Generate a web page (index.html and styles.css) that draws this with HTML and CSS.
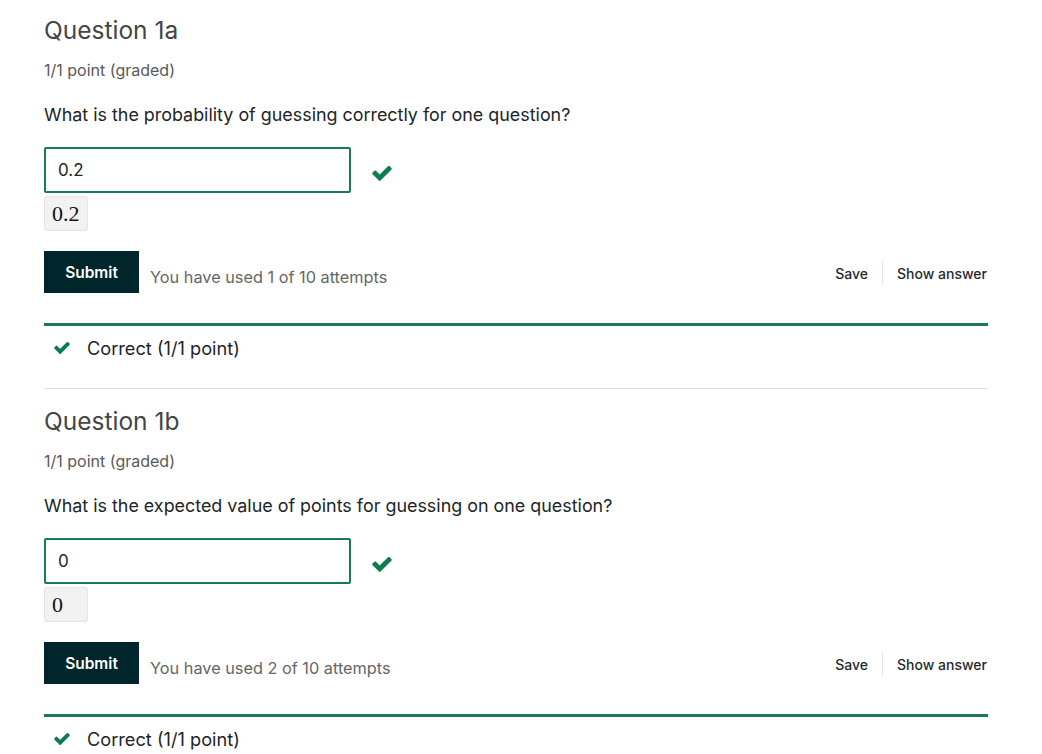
FILE: index.html
```html
<!DOCTYPE html>
<html>
<head>
<meta charset="utf-8">
<link rel="stylesheet" href="styles.css">
</head>
<body>
<div class="page">
  <section class="problem">
    <h3 class="title">Question 1a</h3>
    <div class="meta">1/1 point (graded)</div>
    <p class="prompt">What is the probability of guessing correctly for one question?</p>
    <div class="answer-row">
      <div class="input">0.2</div>
      <svg class="check big" viewBox="121 338 1550 1190"><path d="M1671 566q0 40-28 68l-724 724-136 136q-28 28-68 28t-68-28l-136-136-362-362q-28-28-28-68t28-68l136-136q28-28 68-28t68 28l294 295 656-657q28-28 68-28t68 28l136 136q28 28 28 68z"/></svg>
    </div>
    <div class="preview">0.2</div>
    <div class="actions">
      <button class="submit">Submit</button>
      <span class="attempts">You have used 1 of 10 attempts</span>
      <div class="links">
        <span class="link">Save</span>
        <span class="sep"></span>
        <span class="link">Show answer</span>
      </div>
    </div>
    <div class="feedback">
      <svg class="check small" viewBox="121 338 1550 1190"><path d="M1671 566q0 40-28 68l-724 724-136 136q-28 28-68 28t-68-28l-136-136-362-362q-28-28-28-68t28-68l136-136q28-28 68-28t68 28l294 295 656-657q28-28 68-28t68 28l136 136q28 28 28 68z"/></svg>
      <span>Correct (1/1 point)</span>
    </div>
  </section>
  <hr class="divider">
  <section class="problem">
    <h3 class="title">Question 1b</h3>
    <div class="meta">1/1 point (graded)</div>
    <p class="prompt">What is the expected value of points for guessing on one question?</p>
    <div class="answer-row">
      <div class="input">0</div>
      <svg class="check big" viewBox="121 338 1550 1190"><path d="M1671 566q0 40-28 68l-724 724-136 136q-28 28-68 28t-68-28l-136-136-362-362q-28-28-28-68t28-68l136-136q28-28 68-28t68 28l294 295 656-657q28-28 68-28t68 28l136 136q28 28 28 68z"/></svg>
    </div>
    <div class="preview">0</div>
    <div class="actions">
      <button class="submit">Submit</button>
      <span class="attempts">You have used 2 of 10 attempts</span>
      <div class="links">
        <span class="link">Save</span>
        <span class="sep"></span>
        <span class="link">Show answer</span>
      </div>
    </div>
    <div class="feedback">
      <svg class="check small" viewBox="121 338 1550 1190"><path d="M1671 566q0 40-28 68l-724 724-136 136q-28 28-68 28t-68-28l-136-136-362-362q-28-28-28-68t28-68l136-136q28-28 68-28t68 28l294 295 656-657q28-28 68-28t68 28l136 136q28 28 28 68z"/></svg>
      <span>Correct (1/1 point)</span>
    </div>
  </section>
</div>
</body>
</html>
```
FILE: styles.css
```css
html, body {
  margin: 0;
  padding: 0;
  background: #fff;
}
body {
  font-family: Inter, "Noto Sans", sans-serif;
  color: #212529;
  overflow: hidden;
}
.page {
  width: 944px;
  margin-left: 44px;
  padding-top: 15px;
}
.title {
  margin: 0;
  font-size: 24.5px;
  line-height: 30px;
  font-weight: 400;
  color: #454545;
}
.meta {
  margin-top: 15px;
  font-size: 16px;
  line-height: 20px;
  color: #5a5a5a;
}
.prompt {
  margin: 23px 0 0;
  font-size: 17.9px;
  line-height: 24px;
  color: #212529;
}
.answer-row {
  margin-top: 20px;
  display: flex;
  align-items: center;
}
.input {
  box-sizing: border-box;
  width: 307px;
  height: 46px;
  border: 2px solid #1a7a52;
  border-radius: 2px;
  padding: 0 12px;
  display: flex;
  align-items: center;
  font-size: 17px;
  color: #212529;
}
.check {
  fill: #0d7d4d;
}
.check.big {
  width: 20px;
  height: 15px;
  margin-left: 21px;
  margin-top: 6px;
}
.preview {
  margin-top: 3px;
  box-sizing: border-box;
  display: inline-block;
  height: 35px;
  min-width: 44px;
  padding: 0 7px;
  background: #f2f2f2;
  border: 1px solid #e4e4e4;
  border-radius: 3px;
  font-family: "Liberation Serif", "DejaVu Serif", serif;
  font-size: 22px;
  line-height: 33px;
  color: #111;
}
.actions {
  margin-top: 20px;
  display: flex;
  align-items: center;
}
.submit {
  box-sizing: border-box;
  width: 95px;
  height: 42px;
  border: none;
  border-radius: 0;
  background: #00262b;
  color: #fff;
  font-family: Inter, "Noto Sans", sans-serif;
  font-size: 15.5px;
  font-weight: 600;
  padding: 0;
}
.attempts {
  margin-left: 11px;
  margin-top: 10px;
  font-size: 16.3px;
  color: #666;
}
.links {
  margin-left: auto;
  display: flex;
  align-items: center;
  padding-right: 1px;
  margin-top: 2px;
}
.link {
  font-size: 14px;
  font-weight: 500;
  color: #1f2a30;
}
.sep {
  width: 1px;
  height: 24px;
  background: #e6e6e6;
  margin: 0 14px;
}
.feedback {
  margin-top: 30px;
  border-top: 3px solid #1b7a52;
  padding-top: 10px;
  display: flex;
  align-items: center;
  font-size: 18.2px;
  line-height: 24px;
  color: #212529;
}
.check.small {
  width: 16px;
  height: 12px;
  margin-left: 10px;
  margin-right: 17px;
}
.divider {
  margin: 28px 0 17px;
  border: none;
  border-top: 1px solid #dcdcdc;
  height: 0;
}
```
